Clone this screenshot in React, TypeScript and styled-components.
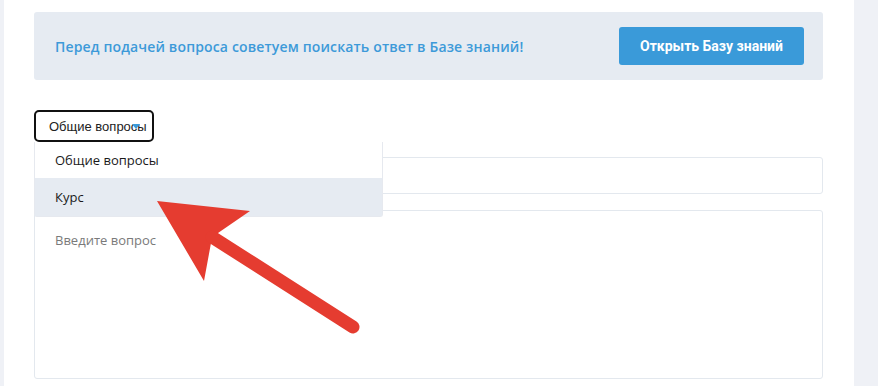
import React from "react";
import styled, { createGlobalStyle } from "styled-components";

const Global = createGlobalStyle`
  html, body { margin: 0; padding: 0; background: #ffffff; }
  body { font-family: "Open Sans", "Liberation Sans", sans-serif; }
  * { box-sizing: border-box; }
`;

const Page = styled.div`
  position: relative;
  display: flex;
  width: 878px;
  height: 386px;
  overflow: hidden;
  background: #ffffff;
`;

const SideStrip = styled.div<{ $w?: number }>`
  flex: ${(p) => (p.$w ? `0 0 ${p.$w}px` : "1 1 auto")};
  background: #eff1f6;
`;

const Main = styled.main`
  flex: 0 0 850px;
  display: flex;
  flex-direction: column;
  padding: 12px 31px 0 30px;
  background: #ffffff;
`;

const Banner = styled.div`
  height: 68px;
  display: flex;
  align-items: center;
  justify-content: space-between;
  padding: 0 19px 0 21px;
  background: #e6ebf2;
  border-radius: 3px;
`;

const BannerText = styled.p`
  margin: 0;
  font-family: "Open Sans", sans-serif;
  font-weight: 600;
  font-size: 14px;
  letter-spacing: 0.15px;
  color: #3d9ad9;
`;

const PrimaryButton = styled.button`
  width: 185px;
  height: 38px;
  border: none;
  border-radius: 3px;
  background: #3a9ad9;
  color: #ffffff;
  font-family: Roboto, "Open Sans", sans-serif;
  font-weight: 700;
  font-size: 14px;
  cursor: pointer;
`;

const SelectWrap = styled.div`
  position: relative;
  margin-top: 30px;
  width: 120px;
  z-index: 2;
`;

const SelectBox = styled.div`
  position: relative;
  width: 120px;
  height: 32px;
  display: flex;
  align-items: center;
  padding-left: 13px;
  border: 2px solid #111111;
  border-radius: 5px;
  background: #ffffff;
  font-family: "Liberation Sans", Arial, sans-serif;
  font-size: 13px;
  color: #222222;
`;

const Caret = styled.span`
  position: absolute;
  left: 96px;
  top: 12px;
  width: 0;
  height: 0;
  border-left: 4px solid transparent;
  border-right: 4px solid transparent;
  border-top: 5px solid #3a9ad9;
`;

const Menu = styled.ul`
  position: absolute;
  top: 100%;
  left: 0;
  width: 349px;
  margin: 0;
  padding: 0;
  list-style: none;
  background: #ffffff;
  border: 1px solid #e6e9ef;
  border-top: none;
  border-radius: 0 0 3px 3px;
`;

const MenuItem = styled.li<{ $active?: boolean }>`
  height: ${(p) => (p.$active ? 38 : 36)}px;
  display: flex;
  align-items: center;
  padding-left: 20px;
  font-family: "Open Sans", sans-serif;
  font-size: 13px;
  color: #1a1a1a;
  background: ${(p) => (p.$active ? "#e6ebf2" : "#ffffff")};
`;

const TextInput = styled.div`
  margin-top: 15px;
  height: 37px;
  border: 1px solid #e3e8ee;
  border-radius: 3px;
  background: #ffffff;
`;

const TextArea = styled.div`
  margin-top: 16px;
  height: 169px;
  padding: 20px 20px;
  border: 1px solid #e3e8ee;
  border-radius: 3px;
  background: #ffffff;
  font-family: "Open Sans", sans-serif;
  font-size: 13px;
  color: #7a7a7a;
`;

const ArrowLayer = styled.svg`
  position: absolute;
  left: 0;
  top: 0;
  z-index: 5;
  pointer-events: none;
`;

export default function App() {
  return (
    <>
      <Global />
      <Page>
        <SideStrip $w={4} />
        <Main>
          <Banner>
            <BannerText>Перед подачей вопроса советуем поискать ответ в Базе знаний!</BannerText>
            <PrimaryButton>Открыть Базу знаний</PrimaryButton>
          </Banner>
          <SelectWrap>
            <SelectBox>
              Общие вопросы
              <Caret />
            </SelectBox>
            <Menu>
              <MenuItem>Общие вопросы</MenuItem>
              <MenuItem $active>Курс</MenuItem>
            </Menu>
          </SelectWrap>
          <TextInput />
          <TextArea>Введите вопрос</TextArea>
        </Main>
        <SideStrip />
        <ArrowLayer width="878" height="386" viewBox="0 0 878 386">
          <polygon points="157,201 250,211 218,233 211,243 204,281" fill="#e53c30" />
          <line x1="212" y1="237" x2="353" y2="327" stroke="#e53c30" strokeWidth="13" strokeLinecap="round" />
        </ArrowLayer>
      </Page>
    </>
  );
}
